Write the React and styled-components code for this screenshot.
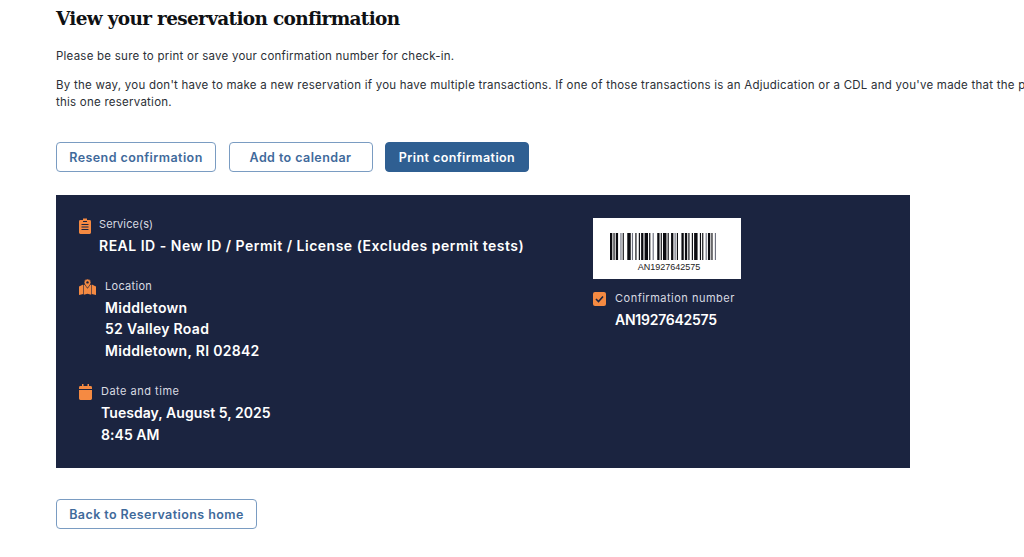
import React from "react";
import styled, { createGlobalStyle } from "styled-components";

const Global = createGlobalStyle`
  html, body { margin: 0; padding: 0; background: #fff; overflow: hidden; }
  #root { width: 1024px; height: 557px; overflow: hidden; }
`;

const Page = styled.main`
  width: 1024px;
  height: 557px;
  box-sizing: border-box;
  padding: 6px 0 0 56px;
  overflow: hidden;
  font-family: "Inter", "Open Sans", sans-serif;
  color: #2b2f36;
`;
const Title = styled.h1`
  margin: 0;
  font-family: "DejaVu Serif", "Liberation Serif", serif;
  font-size: 18.5px;
  line-height: 26px;
  font-weight: 700;
  color: #0f1114;
  letter-spacing: -0.68px;
`;
const Para = styled.p`
  margin: ${(p) => p.$top}px 0 0;
  width: 1200px;
  white-space: nowrap;
  font-size: 11.5px;
  line-height: 17px;
  letter-spacing: 0.24px;
`;
const Actions = styled.div`
  display: flex;
  gap: 12.5px;
  margin-top: 31px;
`;
const Btn = styled.button`
  box-sizing: border-box;
  height: 30px;
  width: ${(p) => p.$w}px;
  padding: 0;
  border-radius: 4px;
  border: 1px solid ${(p) => (p.$solid ? "#2f5f92" : "#7a9cc2")};
  background: ${(p) => (p.$solid ? "#2f5f92" : "#fff")};
  color: ${(p) => (p.$solid ? "#fff" : "#3f6a9b")};
  font-family: inherit;
  font-size: 12.5px;
  font-weight: 600;
  letter-spacing: 0.42px;
`;
const Panel = styled.section`
  box-sizing: border-box;
  width: 854px;
  height: 273px;
  margin-top: 23px;
  padding: 21px 0 0 23px;
  background: #1b2440;
  display: flex;
  color: #fff;
`;
const Left = styled.div`
  width: 514px;
  display: flex;
  flex-direction: column;
`;
const Right = styled.div`
  display: flex;
  flex-direction: column;
  padding-top: 2px;
`;
const Item = styled.div`
  display: flex;
  gap: ${(p) => p.$gap}px;
  margin-top: ${(p) => p.$top || 0}px;
`;
const IconCell = styled.div`
  width: ${(p) => p.$w}px;
  padding-top: ${(p) => p.$pad ?? 2}px;
  flex: none;
  line-height: 0;
`;
const Label = styled.div`
  font-size: 11px;
  line-height: 17px;
  letter-spacing: ${(p) => p.$ls ?? 0.5}px;
  color: #d9dbe2;
`;
const Value = styled.div`
  margin-top: ${(p) => p.$top}px;
  font-size: 14px;
  font-weight: 600;
  line-height: 21.6px;
  letter-spacing: ${(p) => p.$ls}px;
  color: #fff;
`;
const BarcodeBox = styled.div`
  box-sizing: border-box;
  width: 148px;
  height: 61px;
  background: #fff;
  padding-top: 15px;
  display: flex;
  flex-direction: column;
  align-items: center;
`;
const BarSlot = styled.div`
  line-height: 0;
  margin-right: 8px;
`;
const BarText = styled.div`
  font-family: "Liberation Sans", sans-serif;
  font-size: 9px;
  line-height: 11px;
  margin: 2px 0 0 4px;
  color: #222;
`;
const ConfRow = styled.div`
  display: flex;
  gap: 9px;
  margin-top: 11px;
`;
const Check = styled.div`
  width: 13px;
  height: 14px;
  margin-top: 2px;
  border-radius: 2px;
  background: #f58a42;
  display: flex;
  align-items: center;
  justify-content: center;
  flex: none;
`;
const Home = styled(Btn)`
  display: block;
  margin-top: 31px;
`;

const widths = [2,1,1,1,2,2,1,1,1,3,3,1,1,2,1,2,1,1,2,1,3,1,1,2,1,3,2,1,1,1,3,1,1,2,2,1,1,1,1,3,2,1,2,1,1,2,1,1,3,2,1,1,1,2,1,1,2,1,1,2,1];
const bars = (() => {
  let x = 0;
  return widths.map((w, i) => {
    const bar = { x, w, on: i % 2 === 0 };
    x += w;
    return bar;
  }).filter((b) => b.on);
})();
const total = widths.reduce((a, b) => a + b, 0);

const Barcode = () => (
  <svg width="106" height="27" viewBox={`0 0 ${total} 27`} preserveAspectRatio="none" aria-hidden>
    {bars.map((b, i) => (
      <rect key={i} x={b.x} y="0" width={b.w} height="27" fill={b.w === 1 && i % 3 === 0 ? "#6f7280" : "#0b0b10"} />
    ))}
  </svg>
);

const O = "#f58a42";
const Clipboard = () => (
  <svg width="12" height="16" viewBox="0 0 12 16">
    <path fill={O} d="M4 0.6h4v1.400h2.600A1.400 1.400 0 0 1 12 3.400v11.200a1.400 1.400 0 0 1-1.400 1.400H1.400A1.400 1.400 0 0 1 0 14.600V3.400A1.400 1.400 0 0 1 1.400 2H4z" />
    <path stroke="#1b2440" strokeWidth="1" d="M2.500 6.500h7M2.500 9h7M2.500 11.500h7" />
    <rect x="4" y="3" width="4" height="1" fill="#1b2440" />
  </svg>
);
const MapPin = () => (
  <svg width="17" height="16" viewBox="0 0 17 16">
    <path fill={O} d="M0 7.500 4.200 5.500V15L0 16zM4.800 6l1.300-.2 2.400 4 2.400-4 1.300.2V15.800L8.500 14.700 4.800 15.800zM12.800 5.500 17 7.500V16l-4.200-1z" />
    <path fill={O} stroke="#1b2440" strokeWidth="0.6" d="M8.500 0A3.400 3.400 0 0 0 5.100 3.400C5.100 5.600 8.500 9 8.500 9s3.400-3.400 3.400-5.600A3.400 3.400 0 0 0 8.500 0z" />
    <circle cx="8.500" cy="3.400" r="1.200" fill="#1b2440" />
  </svg>
);
const Calendar = () => (
  <svg width="13" height="16" viewBox="0 0 13 16">
    <path fill={O} d="M3 0h1.500v2h4V0H10v2h1.600A1.400 1.400 0 0 1 13 3.400V5H0V3.400A1.400 1.400 0 0 1 1.400 2H3z" />
    <path fill={O} d="M0 6h13v8.600a1.400 1.400 0 0 1-1.400 1.400H1.400A1.400 1.400 0 0 1 0 14.600z" />
  </svg>
);

export default function App() {
  return (
    <Page>
      <Global />
      <Title>View your reservation confirmation</Title>
      <Para $top={16}>Please be sure to print or save your confirmation number for check-in.</Para>
      <Para $top={12}>
        By the way, you don't have to make a new reservation if you have multiple transactions. If one of those transactions is an Adjudication or a CDL and you've made that the primary reason for your visit, you can do it all during<br />this one reservation.
      </Para>
      <Actions>
        <Btn $w={160}>Resend confirmation</Btn>
        <Btn $w={144}>Add to calendar</Btn>
        <Btn $w={144} $solid>Print confirmation</Btn>
      </Actions>
      <Panel>
        <Left>
          <Item $gap={8}>
            <IconCell $w={12}><Clipboard /></IconCell>
            <div>
              <Label $ls={0.1}>Service(s)</Label>
              <Value $top={2} $ls={0.5}>REAL ID - New ID / Permit / License (Excludes permit tests)</Value>
            </div>
          </Item>
          <Item $gap={9} $top={21}>
            <IconCell $w={17} $pad={1}><MapPin /></IconCell>
            <div>
              <Label $ls={0.3}>Location</Label>
              <Value $top={2} $ls={0.3}>Middletown<br />52 Valley Road<br />Middletown, RI 02842</Value>
            </div>
          </Item>
          <Item $gap={8} $top={22}>
            <IconCell $w={14} $pad={1}><Calendar /></IconCell>
            <div>
              <Label>Date and time</Label>
              <Value $top={2} $ls={0.05}>Tuesday, August 5, 2025<br />8:45 AM</Value>
            </div>
          </Item>
        </Left>
        <Right>
          <BarcodeBox>
            <BarSlot><Barcode /></BarSlot>
            <BarText>AN1927642575</BarText>
          </BarcodeBox>
          <ConfRow>
            <Check>
              <svg width="9" height="8" viewBox="0 0 9 8"><path d="M1 4l2.500 2.500L8 1.500" fill="none" stroke="#1b2440" strokeWidth="1.600" /></svg>
            </Check>
            <div>
              <Label>Confirmation number</Label>
              <Value $top={2} $ls={-0.25}>AN1927642575</Value>
            </div>
          </ConfRow>
        </Right>
      </Panel>
      <Home $w={201}>Back to Reservations home</Home>
    </Page>
  );
}
